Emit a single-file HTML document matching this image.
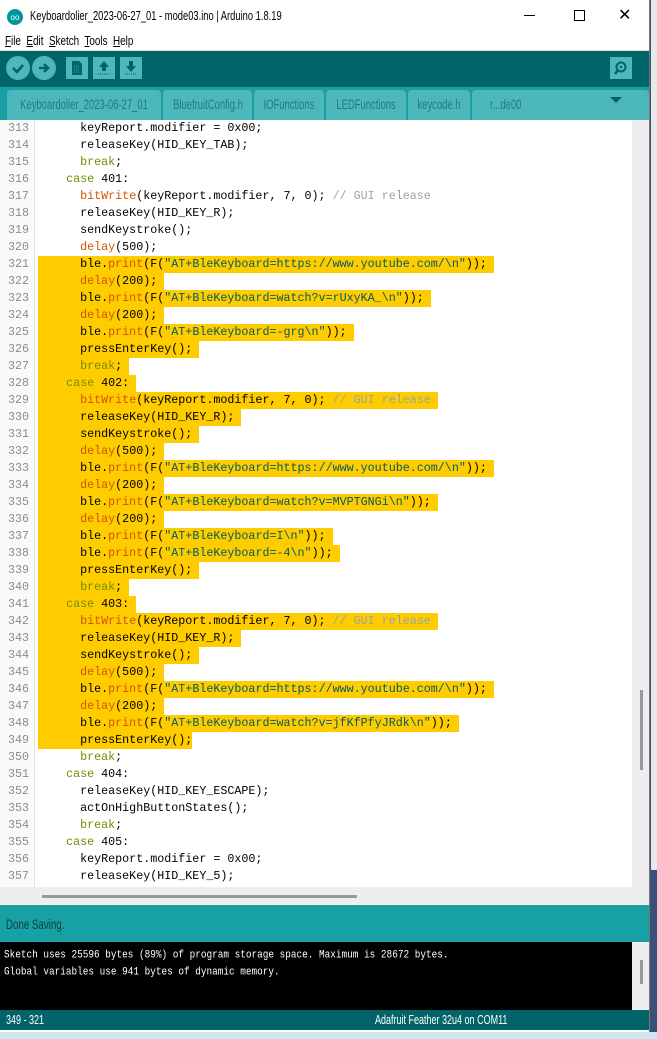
<!DOCTYPE html>
<html><head><meta charset="utf-8"><style>
*{margin:0;padding:0;box-sizing:border-box}
body{width:657px;height:1039px;overflow:hidden;background:#3a4f7a;font-family:"Liberation Sans",sans-serif;position:relative}
.abs{position:absolute}
.n{display:inline-block;transform:scaleX(.76);transform-origin:left center;white-space:nowrap}
.nc{position:absolute;left:50%;top:0;transform:translateX(-50%) scaleX(.7);white-space:nowrap}
#win{left:0;top:0;width:650px;height:1032px;background:#fff;border-right:1px solid #777}
#title{left:0;top:0;width:649px;height:32px;background:#fff;font-size:12.5px;color:#000}
#menu{left:0;top:32px;width:649px;height:19px;background:#fff;font-size:12.5px;border-bottom:1px solid #ddd}
#tool{left:0;top:51px;width:649px;height:36px;background:#006468}
.circ{width:24px;height:24px;border-radius:50%;background:#4db7bb;top:5px}
.sq{width:22px;height:22px;background:#4db7bb;top:6px}
#tabs{left:0;top:87px;width:649px;height:33px;background:#17a1a5}
.tab{top:3px;height:30px;background:#4db8bb;border-radius:4px 4px 0 0;color:#1c7d80;font-size:13.5px;line-height:30px;white-space:nowrap;overflow:hidden}
#ed{left:0;top:120px;width:649px;height:785px;background:#eeeeee}
#code{left:0;top:0;width:632px;height:767px;background:#fff;overflow:hidden}
#gut{left:0;top:0;width:35px;height:767px;background:#fafafa;border-right:1px solid #e2e2e2}
.row{height:17px;line-height:17px;font-family:"Liberation Mono",monospace;font-size:11.7px;white-space:pre;color:#000;position:relative}
.ln{position:absolute;left:0;width:29px;text-align:right;color:#8c8c8c;height:17px;line-height:17px}
.cl{position:absolute;left:38px;display:inline-block;height:17px;line-height:17px}
.h{background:#ffcc00}
.k{color:#728e00}.o{color:#d35400}.s{color:#005c5f}.c{color:#95a5a6}
#status{left:0;top:905px;width:649px;height:37px;background:#17a1a5;color:#0c3f40;font-size:13.5px;padding:12px 0 0 6px}
#cons{left:0;top:942px;width:649px;height:68px;background:#000;color:#fff;font-family:"Liberation Mono",monospace;font-size:9.4px;line-height:17px;padding:4px 0 0 4px;white-space:pre}
#cons div{transform:scaleY(1.2);transform-origin:left center}
#bot{left:0;top:1010px;width:649px;height:20px;background:#006468;color:#fff;font-size:12.5px;line-height:20px}
</style></head><body>
<div id="win" class="abs">
<div id="title" class="abs">
<svg class="abs" style="left:7px;top:9px" width="16" height="16"><circle cx="8" cy="8" r="8" fill="#00979c"/><text x="8" y="11" font-size="8" fill="#fff" text-anchor="middle" font-family="Liberation Sans">oo</text></svg>
<div class="abs n" style="left:30px;top:8px;font-size:13px;transform:scaleX(.72)">Keyboardolier_2023-06-27_01 - mode03.ino | Arduino 1.8.19</div>
<div class="abs" style="left:524px;top:15px;width:11px;height:1px;background:#000"></div>
<div class="abs" style="left:574px;top:10px;width:11px;height:11px;border:1px solid #000"></div>
<div class="abs" style="left:618px;top:5px;font-size:16px">✕</div>
</div>
<div id="menu" class="abs"><span class="abs n" style="left:5px;top:1px;font-size:13px"><u>F</u>ile&nbsp; <u>E</u>dit&nbsp; <u>S</u>ketch&nbsp; <u>T</u>ools&nbsp; <u>H</u>elp</span></div>
<div id="tool" class="abs">
<div class="abs circ" style="left:6px"><svg width="24" height="24"><path d="M7 12l4 4 6-7" stroke="#006468" stroke-width="2.6" fill="none"/></svg></div>
<div class="abs circ" style="left:32px"><svg width="24" height="24"><path d="M7 12h9M12 8l4 4-4 4" stroke="#006468" stroke-width="2.6" fill="none"/></svg></div>
<div class="abs sq" style="left:66px"><svg width="22" height="22"><path d="M6 4h7l3 3v11H6z" fill="#006468"/><path d="M8 9h6M8 11h6M8 13h6M8 15h6" stroke="#4db7bb" stroke-width="0.8" stroke-dasharray="1 1"/></svg></div>
<div class="abs sq" style="left:93px"><svg width="22" height="22"><path d="M11 4l5 6h-3v4h-4v-4H6z" fill="#006468"/><path d="M5 17h12" stroke="#006468" stroke-dasharray="1 1"/></svg></div>
<div class="abs sq" style="left:120px"><svg width="22" height="22"><path d="M11 15l5-6h-3V4H9v5H6z" fill="#006468"/><path d="M5 17h12" stroke="#006468" stroke-dasharray="1 1"/></svg></div>
<div class="abs sq" style="left:610px"><svg width="22" height="22"><circle cx="11" cy="10" r="4.5" stroke="#006468" stroke-width="2" fill="none"/><path d="M8 13l-3 4" stroke="#006468" stroke-width="2.5"/><circle cx="11" cy="10" r="1.2" fill="#006468"/></svg></div>
</div>
<div id="tabs" class="abs">
<div class="abs tab" style="left:7px;width:154px"><span class="nc">Keyboardolier_2023-06-27_01</span></div>
<div class="abs tab" style="left:163px;width:89px"><span class="nc">BluefruitConfig.h</span></div>
<div class="abs tab" style="left:254px;width:70px"><span class="nc">IOFunctions</span></div>
<div class="abs tab" style="left:326px;width:80px"><span class="nc">LEDFunctions</span></div>
<div class="abs tab" style="left:408px;width:62px"><span class="nc">keycode.h</span></div>
<div class="abs tab" style="left:472px;width:177px"><span class="abs n" style="left:18px;transform:scaleX(.7)">r...de00</span></div>
<svg class="abs" style="left:610px;top:10px" width="12" height="8"><path d="M0 0h12L6 6z" fill="#006468"/></svg>
</div>
<div id="ed" class="abs">
<div id="code" class="abs">
<div id="gut" class="abs"></div>
<div class="abs" style="left:0;top:0;width:632px">
<div class="row"><span class="ln">313</span><span class="cl">      keyReport.modifier = 0x00;</span></div>
<div class="row"><span class="ln">314</span><span class="cl">      releaseKey(HID_KEY_TAB);</span></div>
<div class="row"><span class="ln">315</span><span class="cl">      <span class="k">break</span>;</span></div>
<div class="row"><span class="ln">316</span><span class="cl">    <span class="k">case</span> 401:</span></div>
<div class="row"><span class="ln">317</span><span class="cl">      <span class="o">bitWrite</span>(keyReport.modifier, 7, 0); <span class="c">// GUI release</span></span></div>
<div class="row"><span class="ln">318</span><span class="cl">      releaseKey(HID_KEY_R);</span></div>
<div class="row"><span class="ln">319</span><span class="cl">      sendKeystroke();</span></div>
<div class="row"><span class="ln">320</span><span class="cl">      <span class="o">delay</span>(500);</span></div>
<div class="row"><span class="ln">321</span><span class="cl h">      ble.<span class="o">print</span>(F(<span class="s">"AT+BleKeyboard=https://www.youtube.com/\n"</span>)); </span></div>
<div class="row"><span class="ln">322</span><span class="cl h">      <span class="o">delay</span>(200); </span></div>
<div class="row"><span class="ln">323</span><span class="cl h">      ble.<span class="o">print</span>(F(<span class="s">"AT+BleKeyboard=watch?v=rUxyKA_\n"</span>)); </span></div>
<div class="row"><span class="ln">324</span><span class="cl h">      <span class="o">delay</span>(200); </span></div>
<div class="row"><span class="ln">325</span><span class="cl h">      ble.<span class="o">print</span>(F(<span class="s">"AT+BleKeyboard=-grg\n"</span>)); </span></div>
<div class="row"><span class="ln">326</span><span class="cl h">      pressEnterKey(); </span></div>
<div class="row"><span class="ln">327</span><span class="cl h">      <span class="k">break</span>; </span></div>
<div class="row"><span class="ln">328</span><span class="cl h">    <span class="k">case</span> 402: </span></div>
<div class="row"><span class="ln">329</span><span class="cl h">      <span class="o">bitWrite</span>(keyReport.modifier, 7, 0); <span class="c">// GUI release</span> </span></div>
<div class="row"><span class="ln">330</span><span class="cl h">      releaseKey(HID_KEY_R); </span></div>
<div class="row"><span class="ln">331</span><span class="cl h">      sendKeystroke(); </span></div>
<div class="row"><span class="ln">332</span><span class="cl h">      <span class="o">delay</span>(500); </span></div>
<div class="row"><span class="ln">333</span><span class="cl h">      ble.<span class="o">print</span>(F(<span class="s">"AT+BleKeyboard=https://www.youtube.com/\n"</span>)); </span></div>
<div class="row"><span class="ln">334</span><span class="cl h">      <span class="o">delay</span>(200); </span></div>
<div class="row"><span class="ln">335</span><span class="cl h">      ble.<span class="o">print</span>(F(<span class="s">"AT+BleKeyboard=watch?v=MVPTGNGi\n"</span>)); </span></div>
<div class="row"><span class="ln">336</span><span class="cl h">      <span class="o">delay</span>(200); </span></div>
<div class="row"><span class="ln">337</span><span class="cl h">      ble.<span class="o">print</span>(F(<span class="s">"AT+BleKeyboard=I\n"</span>)); </span></div>
<div class="row"><span class="ln">338</span><span class="cl h">      ble.<span class="o">print</span>(F(<span class="s">"AT+BleKeyboard=-4\n"</span>)); </span></div>
<div class="row"><span class="ln">339</span><span class="cl h">      pressEnterKey(); </span></div>
<div class="row"><span class="ln">340</span><span class="cl h">      <span class="k">break</span>; </span></div>
<div class="row"><span class="ln">341</span><span class="cl h">    <span class="k">case</span> 403: </span></div>
<div class="row"><span class="ln">342</span><span class="cl h">      <span class="o">bitWrite</span>(keyReport.modifier, 7, 0); <span class="c">// GUI release</span> </span></div>
<div class="row"><span class="ln">343</span><span class="cl h">      releaseKey(HID_KEY_R); </span></div>
<div class="row"><span class="ln">344</span><span class="cl h">      sendKeystroke(); </span></div>
<div class="row"><span class="ln">345</span><span class="cl h">      <span class="o">delay</span>(500); </span></div>
<div class="row"><span class="ln">346</span><span class="cl h">      ble.<span class="o">print</span>(F(<span class="s">"AT+BleKeyboard=https://www.youtube.com/\n"</span>)); </span></div>
<div class="row"><span class="ln">347</span><span class="cl h">      <span class="o">delay</span>(200); </span></div>
<div class="row"><span class="ln">348</span><span class="cl h">      ble.<span class="o">print</span>(F(<span class="s">"AT+BleKeyboard=watch?v=jfKfPfyJRdk\n"</span>)); </span></div>
<div class="row"><span class="ln">349</span><span class="cl h">      pressEnterKey();</span></div>
<div class="row"><span class="ln">350</span><span class="cl">      <span class="k">break</span>;</span></div>
<div class="row"><span class="ln">351</span><span class="cl">    <span class="k">case</span> 404:</span></div>
<div class="row"><span class="ln">352</span><span class="cl">      releaseKey(HID_KEY_ESCAPE);</span></div>
<div class="row"><span class="ln">353</span><span class="cl">      actOnHighButtonStates();</span></div>
<div class="row"><span class="ln">354</span><span class="cl">      <span class="k">break</span>;</span></div>
<div class="row"><span class="ln">355</span><span class="cl">    <span class="k">case</span> 405:</span></div>
<div class="row"><span class="ln">356</span><span class="cl">      keyReport.modifier = 0x00;</span></div>
<div class="row"><span class="ln">357</span><span class="cl">      releaseKey(HID_KEY_5);</span></div>
</div>
</div>
<div class="abs" style="left:640px;top:570px;width:3px;height:80px;background:#999"></div>
<div class="abs" style="left:42px;top:775px;width:315px;height:3px;background:#999"></div>
</div>
<div id="status" class="abs"><span class="n" style="transform:scaleX(.72)">Done Saving.</span></div>
<div id="cons" class="abs"><div>Sketch uses 25596 bytes (89%) of program storage space. Maximum is 28672 bytes.</div><div>Global variables use 941 bytes of dynamic memory.</div></div>
<div class="abs" style="left:632px;top:942px;width:17px;height:68px;background:#eee"><div class="abs" style="left:8px;top:18px;width:3px;height:24px;background:#999"></div></div>
<div id="bot" class="abs"><span class="abs n" style="left:6px;transform:scaleX(.72)">349 - 321</span><span class="abs n" style="left:375px;transform:scaleX(.72)">Adafruit Feather 32u4 on COM11</span></div>
</div>
<div class="abs" style="left:651px;top:0;width:6px;height:870px;background:#e8e8e8"></div>
<div class="abs" style="left:0;top:1032px;width:657px;height:7px;background:#cfe6ee"></div>
</body></html>
